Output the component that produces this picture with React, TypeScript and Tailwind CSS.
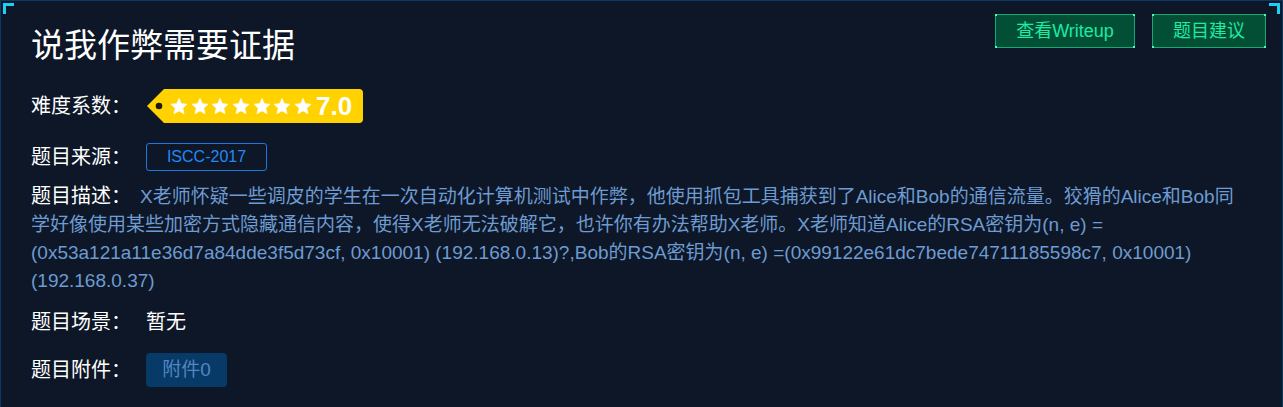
import React from "react";

const CN = { fontFamily: '"Liberation Sans", "Noto Sans CJK SC", sans-serif' };

function Star({ x }: { x: number }) {
  const cx = x, cy = 18, R = 8.4, r = 3.9;
  const pts: string[] = [];
  for (let i = 0; i < 10; i++) {
    const a = -Math.PI / 2 + (i * Math.PI) / 5;
    const rad = i % 2 === 0 ? R : r;
    pts.push(`${(cx + rad * Math.cos(a)).toFixed(2)},${(cy + rad * Math.sin(a) + 0.9).toFixed(2)}`);
  }
  return <polygon points={pts.join(" ")} fill="#ffffff" strokeLinejoin="round" stroke="#ffffff" strokeWidth="0.8" />;
}

function GreenButton({ children, w }: { children: React.ReactNode; w: string }) {
  return (
    <div className={`relative ${w} h-[34px] flex items-center justify-center bg-[#024f36] border border-[#14a874] text-[#1ceba2] text-[18px]`}>
      <span className="absolute -left-px -top-px w-[2px] h-[2px] bg-[#3dffbf]" />
      <span className="absolute -right-px -top-px w-[2px] h-[2px] bg-[#3dffbf]" />
      <span className="absolute -left-px -bottom-px w-[2px] h-[2px] bg-[#3dffbf]" />
      <span className="absolute -right-px -bottom-px w-[2px] h-[2px] bg-[#3dffbf]" />
      {children}
    </div>
  );
}

export default function App() {
  const stars = [179, 200, 220, 241, 262, 282, 303].map((v) => v - 146);
  return (
    <div className="w-[1283px] h-[407px] overflow-hidden bg-[#0c1726]" style={CN}>
      <div className="relative w-[1283px] h-[430px] border border-[#0b3866] bg-[#0d1727] pl-[30px] pr-[16px] pt-[24px]">
        {/* corner accents */}
        <span className="absolute left-[2px] top-[2px] w-[11px] h-[11px] border-l-[3px] border-t-[3px] border-[#1ad1f0]" />
        <span className="absolute right-[2px] top-[2px] w-[11px] h-[11px] border-r-[3px] border-t-[3px] border-[#1ad1f0]" />

        <div className="flex items-start justify-between">
          <h1 className="text-[33px] leading-[42px] text-white font-normal">说我作弊需要证据</h1>
          <div className="flex gap-[17px] -mt-[11px]">
            <GreenButton w="w-[140px]">查看Writeup</GreenButton>
            <GreenButton w="w-[114px]">题目建议</GreenButton>
          </div>
        </div>

        <div className="flex items-center mt-[21px] h-[36px]">
          <span className="w-[115px] text-[20px] text-white">难度系数：</span>
          <div className="relative w-[218px] h-[36px] flex items-center">
            <svg className="absolute inset-0" width="218" height="36" viewBox="0 0 218 36">
              <path d="M1 18 L18 1 L213 1 Q217 1 217 5 L217 31 Q217 35 213 35 L18 35 Z" fill="#ffd200" />
              <circle cx="13" cy="18" r="3.3" fill="#1a1a1a" />
              {stars.map((s) => (
                <Star key={s} x={s} />
              ))}
            </svg>
            <span className="relative ml-[170px] text-[26px] font-bold text-white leading-none" style={{ fontFamily: '"Liberation Sans", sans-serif' }}>
              7.0
            </span>
          </div>
        </div>

        <div className="flex items-center mt-[19px] h-[28px]">
          <span className="w-[115px] text-[20px] text-white">题目来源：</span>
          <div className="w-[121px] h-[28px] rounded-[3px] border border-[#1b78e0] text-[#2389f3] text-[16px] flex items-center justify-center">
            ISCC-2017
          </div>
        </div>

        <div className="mt-[11px] text-[19px] leading-[28px] text-[#6d9bd2] pr-[20px]">
          <span className="text-[20px] text-white mr-[9px]">题目描述：</span>
          X老师怀疑一些调皮的学生在一次自动化计算机测试中作弊，他使用抓包工具捕获到了Alice和Bob的通信流量。狡猾的Alice和Bob同学好像使用某些加密方式隐藏通信内容，使得X老师无法破解它，也许你有办法帮助X老师。X老师知道Alice的RSA密钥为(n, e) = (0x53a121a11e36d7a84dde3f5d73cf, 0x10001) (192.168.0.13)?,Bob的RSA密钥为(n, e) =(0x99122e61dc7bede74711185598c7, 0x10001) (192.168.0.37)
        </div>

        <div className="flex items-center mt-[12px] h-[30px]">
          <span className="w-[115px] text-[20px] text-white">题目场景：</span>
          <span className="text-[20px] text-white">暂无</span>
        </div>

        <div className="flex items-center mt-[16px] h-[34px]">
          <span className="w-[115px] text-[20px] text-white">题目附件：</span>
          <div className="w-[81px] h-[34px] rounded-[4px] bg-[#073a67] text-[#5286c2] text-[19px] flex items-center justify-center">
            附件0
          </div>
        </div>
      </div>
    </div>
  );
}
